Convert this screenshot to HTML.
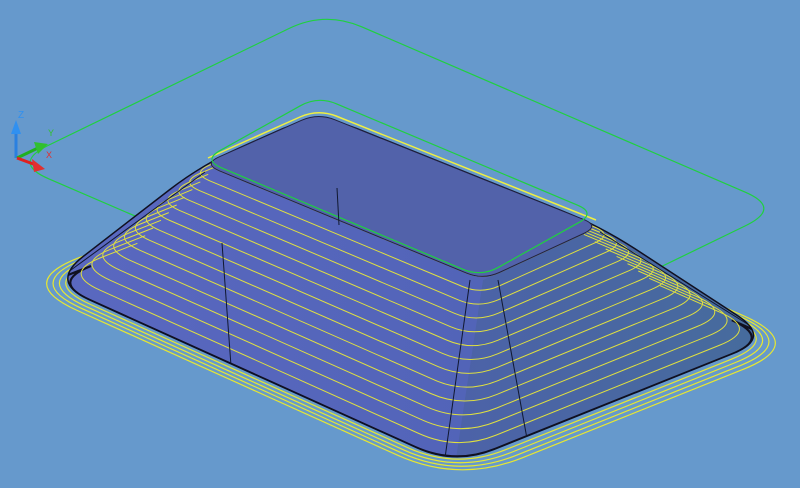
<!DOCTYPE html>
<html><head><meta charset="utf-8"><style>
html,body{margin:0;padding:0;background:#6699cc;width:800px;height:488px;overflow:hidden}
svg{display:block}
</style></head><body>
<svg id="s" width="800" height="488" viewBox="0 0 800 488" xmlns="http://www.w3.org/2000/svg">
<defs>
<linearGradient id="lf" x1="0" y1="0" x2="1" y2="0"><stop offset="0" stop-color="#5a68c0"/><stop offset="1" stop-color="#5264b8"/></linearGradient>
<linearGradient id="rf" x1="0" y1="0" x2="1" y2="0"><stop offset="0" stop-color="#4c62a8"/><stop offset="1" stop-color="#466c9c"/></linearGradient>
<clipPath id="cp"><path id="cpp" d=""/></clipPath>
</defs>
<g id="greenOuter"></g>
<g id="outerY"></g>
<g id="faces"></g>
<g id="cont" clip-path="url(#cp)"></g>
<g id="top"></g>
<g id="greenInner"></g>
<g id="edges" clip-path="url(#cp)"></g>
<g id="axis">
<line x1="16" y1="158" x2="16" y2="130" stroke="#2a80e0" stroke-width="3"/>
<polygon points="11,134 16,120 21,134" fill="#3090f0"/>
<line x1="17" y1="158" x2="38" y2="148" stroke="#20b020" stroke-width="3"/>
<polygon points="34,142 48,144 38,154" fill="#30c030"/>
<line x1="17" y1="158" x2="36" y2="165" stroke="#e02020" stroke-width="3"/>
<polygon points="32,159 45,169 34,172" fill="#e03030"/>
<text x="18" y="118" font-family="Liberation Sans,sans-serif" font-size="10" fill="#3090f0">Z</text>
<text x="48" y="136" font-family="Liberation Sans,sans-serif" font-size="9" fill="#30c030">Y</text>
<text x="46" y="158" font-family="Liberation Sans,sans-serif" font-size="9" fill="#e03030">X</text>
</g>
</svg>
<script>
var NS="http://www.w3.org/2000/svg";
function el(g,tag,a){var e=document.createElementNS(NS,tag);for(var k in a)e.setAttribute(k,a[k]);document.getElementById(g).appendChild(e);return e;}
function lerp(a,b,t){return [a[0]+(b[0]-a[0])*t,a[1]+(b[1]-a[1])*t];}
function f1(p){return p[0].toFixed(1)+","+p[1].toFixed(1);}
function rpath(P,r){
 var d="",n=P.length;
 for(var i=0;i<n;i++){
  var p=P[i],a=P[(i+n-1)%n],b=P[(i+1)%n];
  var la=Math.hypot(a[0]-p[0],a[1]-p[1]),lb=Math.hypot(b[0]-p[0],b[1]-p[1]);
  var s=lerp(p,a,Math.min(r/la,0.45)),e=lerp(p,b,Math.min(r/lb,0.45));
  d+=(i==0?"M":"L")+f1(s)+"Q"+f1(p)+" "+f1(e);
 }
 return d+"Z";
}
function openPath(P,r,s){
 var L=P[0],B=P[1],R=P[2],F=P[3];
 function corner(p,a,b){var la=Math.hypot(a[0]-p[0],a[1]-p[1]),lb=Math.hypot(b[0]-p[0],b[1]-p[1]);
  return [lerp(p,a,Math.min(r/la,0.45)),p,lerp(p,b,Math.min(r/lb,0.45))];}
 var c1=corner(L,B,F),c2=corner(F,L,R),c3=corner(R,F,B);
 var st=lerp(L,B,s),en=lerp(R,B,s);
 return "M"+f1(st)+"L"+f1(c1[0])+"Q"+f1(c1[1])+" "+f1(c1[2])+"L"+f1(c2[0])+"Q"+f1(c2[1])+" "+f1(c2[2])+"L"+f1(c3[0])+"Q"+f1(c3[1])+" "+f1(c3[2])+"L"+f1(en);
}
var base=[[50,282],[368,158],[772,338],[455,465]];
var topq=[[203,164],[318,113],[600,226],[483,280]];
el("greenOuter","path",{d:rpath([[12,163],[325,11],[782,208],[469,360]],40),fill:"none",stroke:"#20d040","stroke-width":"1.2"});
var c=[411,318];
for(var k=1;k<=4;k++){
 var f=1+k*0.024;
 var P=base.map(function(p){return [c[0]+(p[0]-c[0])*f,c[1]+(p[1]-c[1])*f+k*1.0];});
 el("outerY","path",{d:openPath(P,48+k*5,0.2),fill:"none",stroke:"#e8e830","stroke-width":"1.2"});
}
var silP=[base[0],topq[0],topq[1],topq[2],base[2],base[3]];
var sil=rpath(silP,42);
document.getElementById("cpp").setAttribute("d",sil);
el("faces","path",{d:sil,fill:"#5563b4"});
el("faces","path",{d:"M"+topq[0]+" L"+topq[3]+" L"+base[3]+" L"+base[0]+"Z",fill:"url(#lf)","clip-path":"url(#cp)"});
el("faces","path",{d:"M"+topq[3]+" L"+topq[2]+" L"+base[2]+" L"+base[3]+"Z",fill:"url(#rf)","clip-path":"url(#cp)"});
el("faces","path",{d:sil,fill:"none",stroke:"#101020","stroke-width":"1.5"});
el("faces","path",{d:openPath(base,44,0.03),fill:"none",stroke:"#101020","stroke-width":"2.2","clip-path":"url(#cp)"});
for(var j=1;j<14;j++){
 var t=j/13;
 var P=base.map(function(p,i){return lerp(p,topq[i],t);});
 el("cont","path",{d:openPath(P,44-26*t,0.25),fill:"none",stroke:"#e0e040","stroke-width":"1"});
}
el("top","path",{d:rpath(topq,18),fill:"#5262aa",stroke:"#202040","stroke-width":"1"});
el("top","path",{d:"M208,158 L300,117 Q318,109 336,116 L596,220",fill:"none",stroke:"#f0f040","stroke-width":"1.5"});
el("greenInner","path",{d:rpath([[203,160],[318,96],[596,213],[481,277]],20),fill:"none",stroke:"#20d040","stroke-width":"1.2"});
[[[470,280],[445,458]],[[498,280],[530,455]],[[600,232],[757,330]],[[205,172],[60,278]],[[222,243],[233,393]],[[337,188],[339,225]]].forEach(function(l){
 el("edges","line",{x1:l[0][0],y1:l[0][1],x2:l[1][0],y2:l[1][1],stroke:"#101830","stroke-width":"1"});
});
</script>
</body></html>
